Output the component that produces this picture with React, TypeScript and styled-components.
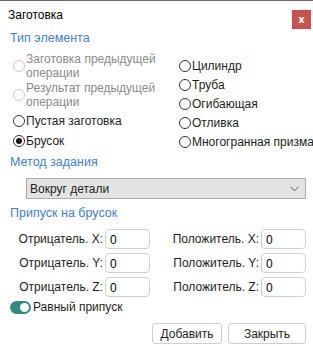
import React, { useState } from 'react'
import styled, { createGlobalStyle } from 'styled-components'

const colors = {
    blue: '#4282c8',
    text: '#1e1e1e',
    disabled: '#8a8a8a',
    red: '#c9514f',
    teal: '#2e8c80',
    border: '#c8c8c8',
}

const GlobalStyle = createGlobalStyle`
    html, body {
        margin: 0;
        padding: 0;
        background: #fff;
    }
    body {
        font-family: 'Liberation Sans', Arial, sans-serif;
        font-size: 12px;
        line-height: 14px;
        color: ${colors.text};
    }
`

const Window = styled.div`
    width: 313px;
    height: 346px;
    box-sizing: border-box;
    border-top: 1px solid #6a6a6a;
    background: #fff;
    display: flex;
    flex-direction: column;
`

const Header = styled.div`
    height: 28px;
    display: flex;
    align-items: center;
    justify-content: space-between;
    padding: 0 2px 0 8px;
    font-size: 12px;
    color: #000;
`

const CloseButton = styled.button`
    width: 19px;
    height: 19px;
    border: none;
    padding: 0;
    margin-top: 8px;
    background: ${colors.red};
    color: #fff;
    font-family: 'DejaVu Sans', sans-serif;
    font-weight: bold;
    font-size: 10px;
    line-height: 19px;
    cursor: pointer;
`

const Body = styled.div`
    padding: 0 7px 0 10px;
    display: flex;
    flex-direction: column;
`

const SectionTitle = styled.div`
    color: ${colors.blue};
    font-size: 12.5px;
    height: 19px;
    line-height: 19px;
`

const TypeGrid = styled.div`
    display: grid;
    grid-template-columns: 166px 1fr;
    margin-top: 4px;
    height: 101px;
    white-space: nowrap;
`

const Column = styled.div<{ $offset?: number }>`
    display: flex;
    flex-direction: column;
    padding-top: ${(p) => p.$offset || 0}px;
`

const RadioRow = styled.label<{ $disabled?: boolean; $h?: number }>`
    display: flex;
    align-items: center;
    gap: 1px;
    height: ${(p) => p.$h || 19}px;
    color: ${(p) => (p.$disabled ? colors.disabled : colors.text)};
    line-height: 14px;
    cursor: ${(p) => (p.$disabled ? 'default' : 'pointer')};
`

const Circle = styled.span<{ $checked?: boolean; $disabled?: boolean }>`
    width: 12px;
    height: 12px;
    flex: none;
    box-sizing: border-box;
    border-radius: 50%;
    border: 1px solid ${(p) => (p.$disabled ? '#c9c9c9' : '#333')};
    display: flex;
    align-items: center;
    justify-content: center;
    margin-left: 3px;

    &:after {
        content: '';
        width: 6px;
        height: 6px;
        border-radius: 50%;
        background: ${(p) => (p.$checked ? '#1a1a1a' : 'transparent')};
    }
`

const Select = styled.div`
    margin: 6px 0 5px 16px;
    height: 21px;
    box-sizing: border-box;
    border: 1px solid #adadad;
    background: #e3e3e3;
    display: flex;
    align-items: center;
    justify-content: space-between;
    padding: 0 6px 0 3px;
`

const FieldGrid = styled.div`
    display: grid;
    grid-template-columns: 140px 1fr;
    row-gap: 4px;
    margin-top: 6px;
`

const Field = styled.div`
    display: flex;
    align-items: center;
    justify-content: flex-end;
    gap: 2px;
    height: 20px;
`

const NumberInput = styled.input`
    width: 45px;
    height: 20px;
    box-sizing: border-box;
    border: 1px solid #d0d0d0;
    border-radius: 4px;
    padding: 2px 0 0 4px;
    font-family: inherit;
    font-size: 12px;
    color: #000;
    outline: none;
`

const ToggleRow = styled.label`
    display: flex;
    align-items: center;
    gap: 2px;
    margin-top: 3px;
    height: 14px;
`

const Toggle = styled.span<{ $on: boolean }>`
    position: relative;
    width: 21px;
    height: 13px;
    border-radius: 7px;
    background: ${(p) => (p.$on ? colors.teal : '#bbb')};
    flex: none;

    &:after {
        content: '';
        position: absolute;
        top: 2px;
        left: ${(p) => (p.$on ? '10px' : '2px')};
        width: 9px;
        height: 9px;
        border-radius: 50%;
        background: #fff;
    }
`

const Footer = styled.div`
    display: flex;
    justify-content: flex-end;
    gap: 6px;
    margin-top: 9px;
`

const Button = styled.button<{ $w: number }>`
    width: ${(p) => p.$w}px;
    height: 21px;
    background: #fff;
    border: 1px solid #cfcfcf;
    border-radius: 3px;
    font-family: inherit;
    font-size: 12px;
    color: ${colors.text};
    padding: 0;
`

const Chevron = () => (
    <svg width='9' height='6' viewBox='0 0 9 6'>
        <path d='M0.5 0.8 L4.5 4.8 L8.5 0.8' fill='none' stroke='#555' strokeWidth='1' />
    </svg>
)

const Radio = ({ label, checked, disabled, h }: { label: React.ReactNode; checked?: boolean; disabled?: boolean; h?: number }) => (
    <RadioRow $disabled={disabled} $h={h}>
        <Circle $checked={checked} $disabled={disabled} />
        <span>{label}</span>
    </RadioRow>
)

const App = () => {
    const [equal, setEqual] = useState(true)
    return (
        <Window>
            <GlobalStyle />
            <Header>
                <span>Заготовка</span>
                <CloseButton>x</CloseButton>
            </Header>
            <Body>
                <SectionTitle>Тип элемента</SectionTitle>
                <TypeGrid>
                    <Column>
                        <Radio disabled h={28} label={<>Заготовка предыдущей<br />операции</>} />
                        <Radio disabled h={30} label={<>Результат предыдущей<br />операции</>} />
                        <Radio h={21} label='Пустая заготовка' />
                        <Radio checked label='Брусок' />
                    </Column>
                    <Column $offset={4}>
                        <Radio label='Цилиндр' />
                        <Radio label='Труба' />
                        <Radio label='Огибающая' />
                        <Radio label='Отливка' />
                        <Radio label='Многогранная призма' />
                    </Column>
                </TypeGrid>
                <SectionTitle>Метод задания</SectionTitle>
                <Select>
                    <span>Вокруг детали</span>
                    <Chevron />
                </Select>
                <SectionTitle>Припуск на брусок</SectionTitle>
                <FieldGrid>
                    <Field>Отрицатель. X:<NumberInput defaultValue='0' /></Field>
                    <Field>Положитель. X:<NumberInput defaultValue='0' /></Field>
                    <Field>Отрицатель. Y:<NumberInput defaultValue='0' /></Field>
                    <Field>Положитель. Y:<NumberInput defaultValue='0' /></Field>
                    <Field>Отрицатель. Z:<NumberInput defaultValue='0' /></Field>
                    <Field>Положитель. Z:<NumberInput defaultValue='0' /></Field>
                </FieldGrid>
                <ToggleRow onClick={() => setEqual(!equal)}>
                    <Toggle $on={equal} />
                    <span>Равный припуск</span>
                </ToggleRow>
                <Footer>
                    <Button $w={70}>Добавить</Button>
                    <Button $w={78}>Закрыть</Button>
                </Footer>
            </Body>
        </Window>
    )
}

export default App
